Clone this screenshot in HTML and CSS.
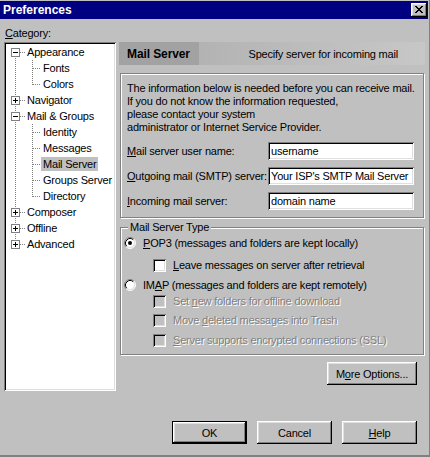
FILE: index.html
```html
<!DOCTYPE html>
<html>
<head>
<meta charset="utf-8">
<title>Preferences</title>
<link rel="stylesheet" href="styles.css">
</head>
<body>
<div class="window">
  <div class="titlebar">
    <span class="title">Preferences</span>
    <span class="close"><svg width="8" height="7" viewBox="0 0 8 7" shape-rendering="crispEdges"><path d="M0 0h2v1h-2zM6 0h2v1h-2zM1 1h2v1h-2zM5 1h2v1h-2zM2 2h4v1h-4zM3 3h2v1h-2zM2 4h4v1h-4zM1 5h2v1h-2zM5 5h2v1h-2zM0 6h2v1h-2zM6 6h2v1h-2z"/></svg></span>
  </div>
  <div class="content">
    <div class="cat-label"><u>C</u>ategory:</div>
    <div class="main">
      <div class="tree">
        <div class="node first"><span class="twig"><span class="exp minus"></span><span class="hdash"></span></span><span class="lbl">Appearance</span></div>
        <div class="node"><span class="twig"></span><span class="twig2"></span><span class="lbl">Fonts</span></div>
        <div class="node lastchild"><span class="twig"></span><span class="twig2"></span><span class="lbl">Colors</span></div>
        <div class="node"><span class="twig"><span class="exp plus"></span><span class="hdash"></span></span><span class="lbl">Navigator</span></div>
        <div class="node"><span class="twig"><span class="exp minus"></span><span class="hdash"></span></span><span class="lbl">Mail &amp; Groups</span></div>
        <div class="node"><span class="twig"></span><span class="twig2"></span><span class="lbl">Identity</span></div>
        <div class="node"><span class="twig"></span><span class="twig2"></span><span class="lbl">Messages</span></div>
        <div class="node"><span class="twig"></span><span class="twig2"></span><span class="lbl sel">Mail Server</span></div>
        <div class="node"><span class="twig"></span><span class="twig2"></span><span class="lbl">Groups Server</span></div>
        <div class="node lastchild"><span class="twig"></span><span class="twig2"></span><span class="lbl">Directory</span></div>
        <div class="node"><span class="twig"><span class="exp plus"></span><span class="hdash"></span></span><span class="lbl">Composer</span></div>
        <div class="node"><span class="twig"><span class="exp plus"></span><span class="hdash"></span></span><span class="lbl">Offline</span></div>
        <div class="node last"><span class="twig"><span class="exp plus"></span><span class="hdash"></span></span><span class="lbl">Advanced</span></div>
      </div>
      <div class="panel">
        <div class="header"><span class="h-title">Mail Server</span><span class="h-desc">Specify server for incoming mail</span></div>
        <div class="group info">
          <p class="intro">The information below is needed before you can receive mail.<br>If you do not know the information requested,<br>please contact your system<br>administrator or Internet Service Provider.</p>
          <div class="fields">
            <label class="flabel" for="f1"><u>M</u>ail server user name:</label>
            <input class="field" id="f1" type="text" value="username">
            <label class="flabel" for="f2"><u>O</u>utgoing mail (SMTP) server:</label>
            <input class="field" id="f2" type="text" value="Your ISP's SMTP Mail Server">
            <label class="flabel" for="f3"><u>I</u>ncoming mail server:</label>
            <input class="field" id="f3" type="text" value="domain name">
          </div>
        </div>
        <fieldset class="group type">
          <legend>Mail Server Type</legend>
          <div class="opt">
            <svg class="radio" width="12" height="12" viewBox="0 0 12 12"><circle cx="6" cy="6" r="5" fill="#fff"/><path d="M2.11 9.89A5.5 5.5 0 0 1 9.89 2.11" stroke="#808080" fill="none"/><path d="M9.89 2.11A5.5 5.5 0 0 1 2.11 9.89" stroke="#fff" fill="none"/><path d="M2.82 9.18A4.5 4.5 0 0 1 9.18 2.82" stroke="#000" fill="none"/><path d="M9.18 2.82A4.5 4.5 0 0 1 2.82 9.18" stroke="#dfdfdf" fill="none"/><circle cx="6" cy="6" r="2" fill="#000"/></svg>
            <span><u>P</u>OP3 (messages and folders are kept locally)</span>
          </div>
          <div class="opt sub leave"><span class="check"></span><span><u>L</u>eave messages on server after retrieval</span></div>
          <div class="opt imap">
            <svg class="radio" width="12" height="12" viewBox="0 0 12 12"><circle cx="6" cy="6" r="5" fill="#fff"/><path d="M2.11 9.89A5.5 5.5 0 0 1 9.89 2.11" stroke="#808080" fill="none"/><path d="M9.89 2.11A5.5 5.5 0 0 1 2.11 9.89" stroke="#fff" fill="none"/><path d="M2.82 9.18A4.5 4.5 0 0 1 9.18 2.82" stroke="#000" fill="none"/><path d="M9.18 2.82A4.5 4.5 0 0 1 2.82 9.18" stroke="#dfdfdf" fill="none"/></svg>
            <span>IM<u>A</u>P (messages and folders are kept remotely)</span>
          </div>
          <div class="opt sub dis"><span class="check off"></span><span>Set <u>n</u>ew folders for offline download</span></div>
          <div class="opt sub dis move"><span class="check off"></span><span>Move <u>d</u>eleted messages into Trash</span></div>
          <div class="opt sub dis ssl"><span class="check off"></span><span><u>S</u>erver supports encrypted connections (SSL)</span></div>
        </fieldset>
        <div class="more-row"><button class="btn more" type="button">M<u>o</u>re Options...</button></div>
      </div>
    </div>
    <div class="buttons">
      <button class="btn default" type="button">OK</button>
      <button class="btn" type="button">Cancel</button>
      <button class="btn" type="button"><u>H</u>elp</button>
    </div>
  </div>
</div>
</body>
</html>
```

FILE: styles.css
```css
html, body {
  margin: 0;
  padding: 0;
}

body {
  width: 430px;
  height: 457px;
  overflow: hidden;
  background: #c0c0c0;
  font-family: "Liberation Sans", Arial, sans-serif;
  font-size: 11px;
  color: #000;
  letter-spacing: -0.2px;
}

.window {
  box-sizing: border-box;
  width: 430px;
  height: 457px;
  padding: 1px 1px 0 0;
  border-right: 1px solid #808080;
  border-bottom: 2px solid #808080;
  display: flex;
  flex-direction: column;
}

.titlebar {
  flex: none;
  height: 18px;
  background: #000080;
  color: #fff;
  display: flex;
  align-items: center;
  padding: 0 1px 0 3px;
}

.title {
  font-weight: bold;
  font-size: 12px;
  letter-spacing: 0;
}

.close {
  margin-left: auto;
  width: 16px;
  height: 14px;
  box-sizing: border-box;
  background: #c0c0c0;
  box-shadow: inset -1px -1px #000, inset 1px 1px #fff, inset -2px -2px #808080, inset 2px 2px #dfdfdf;
  display: flex;
  align-items: center;
  justify-content: center;
}

.close svg {
  display: block;
  margin-bottom: 1px;
}

.content {
  padding: 8px 3px 0 4px;
}

.cat-label {
  line-height: 13px;
  margin: 0 0 2px 1px;
}

.main {
  display: flex;
  gap: 3px;
  align-items: flex-start;
}

/* tree */
.tree {
  flex: none;
  width: 112px;
  height: 349px;
  box-sizing: border-box;
  padding: 2px;
  background: #fff;
  box-shadow: inset 1px 1px #808080, inset -1px -1px #fff, inset 2px 2px #000, inset -2px -2px #dfdfdf;
  overflow: hidden;
}

.node {
  display: flex;
  align-items: center;
  height: 16px;
  white-space: nowrap;
}

.twig {
  flex: none;
  display: flex;
  width: 19px;
  height: 16px;
  background: repeating-linear-gradient(to bottom, #808080 0 1px, transparent 1px 2px) 9px 0 / 1px 16px no-repeat;
}

.first .twig {
  background-position: 9px 8px;
  background-size: 1px 8px;
}

.last .twig {
  background-size: 1px 9px;
}

.exp {
  flex: none;
  width: 9px;
  height: 9px;
  box-sizing: border-box;
  margin: 4px 0 0 5px;
  border: 1px solid #808080;
  background: #fff;
}

.exp.minus {
  background: linear-gradient(#000, #000) center / 5px 1px no-repeat, #fff;
}

.exp.plus {
  background: linear-gradient(#000, #000) center / 5px 1px no-repeat, linear-gradient(#000, #000) center / 1px 5px no-repeat, #fff;
}

.hdash {
  flex: none;
  width: 5px;
  height: 16px;
  background: repeating-linear-gradient(to right, #808080 0 1px, transparent 1px 2px) 0 8px / 5px 1px no-repeat;
}

.twig2 {
  flex: none;
  width: 16px;
  height: 16px;
  background:
    repeating-linear-gradient(to bottom, #808080 0 1px, transparent 1px 2px) 7px 0 / 1px 16px no-repeat,
    repeating-linear-gradient(to right, #808080 0 1px, transparent 1px 2px) 8px 8px / 8px 1px no-repeat;
}

.lastchild .twig2 {
  background-size: 1px 9px, 8px 1px;
}

.lbl {
  padding: 0 2px;
  line-height: 14px;
}

.sel {
  background: #c0c0c0;
}

/* right panel */
.panel {
  flex: none;
  width: 306px;
  display: flex;
  flex-direction: column;
}

.header {
  height: 23px;
  display: flex;
  align-items: center;
  justify-content: space-between;
  padding: 0 27px 0 8px;
  background: linear-gradient(to right, #a2a2a2 0, #a2a2a2 80px, #b3b3b3 80px, #c7c7c7 100%);
}

.h-title {
  font-weight: bold;
  font-size: 12px;
  letter-spacing: -0.1px;
}

.group {
  border: 1px solid #808080;
  box-shadow: inset 1px 1px #fff, 1px 1px #fff;
}

.info {
  margin: 8px 1px 0 1px;
  padding: 8px 6px 7px;
}

.intro {
  margin: 0;
  line-height: 13px;
}

.fields {
  margin-top: 8px;
  display: grid;
  grid-template-columns: 141px 146px;
  row-gap: 7px;
  align-items: center;
}

.flabel {
  line-height: 13px;
}

.field {
  box-sizing: border-box;
  width: 146px;
  height: 18px;
  margin: 0;
  border: 0;
  padding: 0 1px 0 3px;
  font: inherit;
  letter-spacing: inherit;
  color: #000;
  background: #fff;
  box-shadow: inset 1px 1px #808080, inset -1px -1px #fff, inset 2px 2px #000, inset -2px -2px #dfdfdf;
  outline: none;
}

.type {
  margin: 3px 1px 0 1px;
  padding: 1px 3px 6px 3px;
  min-width: 0;
}

.type legend {
  margin-left: 4px;
  padding: 0 2px;
  line-height: 13px;
  background: #c0c0c0;
}

.opt {
  display: flex;
  align-items: center;
  gap: 7px;
  height: 16px;
  white-space: nowrap;
}

.opt.sub {
  margin-left: 29px;
}

.radio {
  flex: none;
  display: block;
}

.leave { margin-top: 6px; }
.imap { margin-top: 4px; }
.move { margin-top: 3px; }
.ssl { margin-top: 4px; }

.check {
  flex: none;
  width: 13px;
  height: 13px;
  background: #fff;
  box-shadow: inset 1px 1px #808080, inset -1px -1px #fff, inset 2px 2px #000, inset -2px -2px #dfdfdf;
}

.check.off {
  background: #c0c0c0;
}

.dis {
  color: #808080;
  text-shadow: 1px 1px 0 #fff;
}

.more-row {
  display: flex;
  justify-content: flex-end;
  margin: 7px 8px 0 0;
}

.btn {
  font: inherit;
  letter-spacing: inherit;
  color: #000;
  background: #c0c0c0;
  border: 0;
  margin: 0;
  padding: 0;
  height: 23px;
  box-shadow: inset -1px -1px #000, inset 1px 1px #fff, inset -2px -2px #808080, inset 2px 2px #dfdfdf;
}

.btn.default {
  box-shadow: inset 0 0 0 1px #000, inset -2px -2px #000, inset 2px 2px #fff, inset -3px -3px #808080, inset 3px 3px #dfdfdf;
}

.more {
  width: 90px;
}

.buttons {
  display: flex;
  justify-content: flex-end;
  gap: 10px;
  margin-top: 30px;
  padding-right: 8px;
}

.buttons .btn {
  width: 75px;
}
```
